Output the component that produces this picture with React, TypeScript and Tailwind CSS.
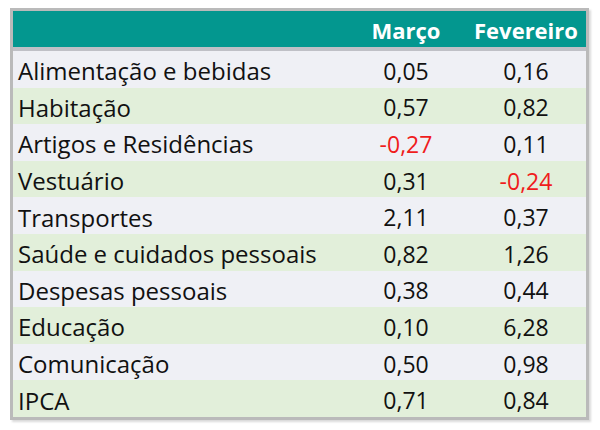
const rows: { label: string; marco: string; fev: string; green: boolean }[] = [
  { label: "Alimentação e bebidas", marco: "0,05", fev: "0,16", green: false },
  { label: "Habitação", marco: "0,57", fev: "0,82", green: true },
  { label: "Artigos e Residências", marco: "-0,27", fev: "0,11", green: false },
  { label: "Vestuário", marco: "0,31", fev: "-0,24", green: true },
  { label: "Transportes", marco: "2,11", fev: "0,37", green: false },
  { label: "Saúde e cuidados pessoais", marco: "0,82", fev: "1,26", green: true },
  { label: "Despesas pessoais", marco: "0,38", fev: "0,44", green: false },
  { label: "Educação", marco: "0,10", fev: "6,28", green: true },
  { label: "Comunicação", marco: "0,50", fev: "0,98", green: false },
  { label: "IPCA", marco: "0,71", fev: "0,84", green: true },
];

function Num({ v }: { v: string }) {
  const neg = v.startsWith("-");
  return <div className={`text-center ${neg ? "text-[#f01c1c]" : "text-[#111]"}`}>{v}</div>;
}

export default function App() {
  return (
    <div className="w-[600px] h-[430px] bg-white pt-2 pl-[10px] font-['Open_Sans',sans-serif]">
      <div className="w-[579px] border-[3px] border-[#bababa] shadow-[2px_2px_2px_rgba(0,0,0,0.15)]">
        <div className="grid grid-cols-[333px_120px_120px] h-[40px] items-center pt-[1px] bg-[#03978f] text-white font-bold text-[22px] leading-none border-b-[4px] border-[#bfc0c6]">
          <div />
          <div className="text-center">Março</div>
          <div className="text-center">Fevereiro</div>
        </div>
        {rows.map((r) => (
          <div
            key={r.label}
            className={`grid grid-cols-[333px_120px_120px] h-[36.6px] items-center pt-[4px] text-[23px] leading-none ${
              r.green ? "bg-[#e2efda]" : "bg-[#eff0f5]"
            }`}
          >
            <div className="pl-[5px] text-[#111] text-[24px] whitespace-nowrap">{r.label}</div>
            <Num v={r.marco} />
            <Num v={r.fev} />
          </div>
        ))}
      </div>
    </div>
  );
}
